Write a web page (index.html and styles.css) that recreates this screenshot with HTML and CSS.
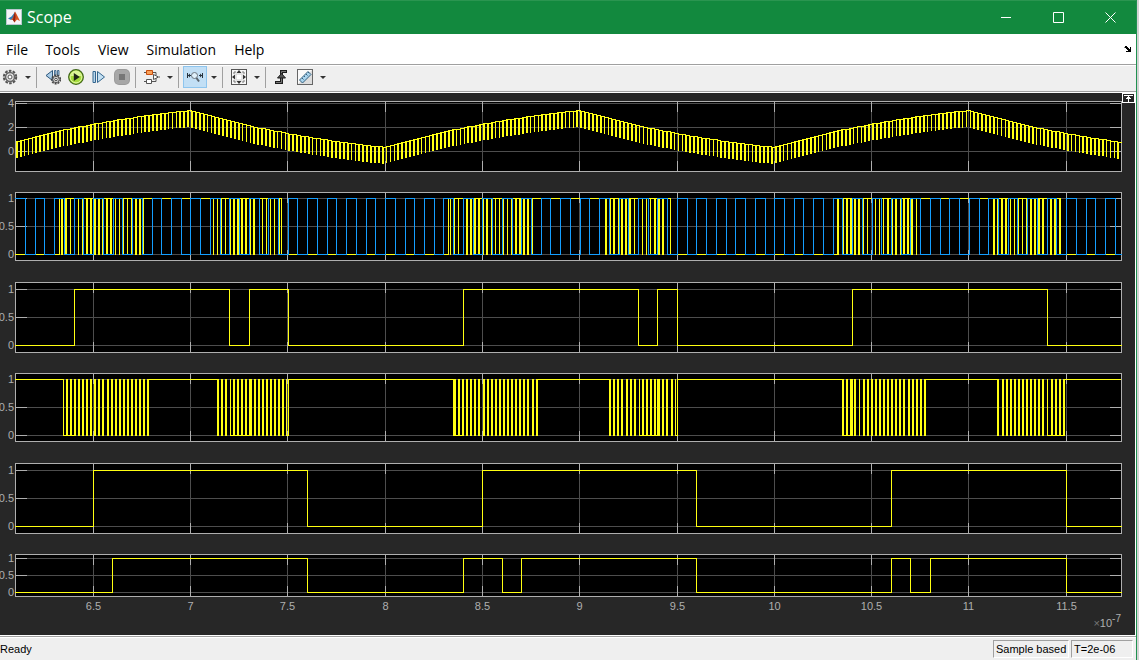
FILE: index.html
```html
<!DOCTYPE html>
<html lang="en">
<head>
<meta charset="utf-8">
<title>Scope</title>
<link rel="stylesheet" href="styles.css">
</head>
<body>
<div class="window">
  <header class="titlebar">
    <svg class="app-icon" viewBox="0 0 16 16" aria-hidden="true">
      <rect x=".5" y=".5" width="15" height="15" fill="#f4f6f8" stroke="#b9c8cf"/>
      <path d="M2 9.500 5.500 7.500 9 3 7.500 9 5 11z" fill="#2f7fb5"/>
      <path d="M5 11 7 8.500 9 2.500 10.500 5 14 12 11 10.500 8.500 13.500 7 11z" fill="#d9541e"/>
      <path d="M9 2.500 9.500 8 8.500 13.500 7 11 7.500 8z" fill="#8a2416"/>
    </svg>
    <h1 class="title">Scope</h1>
    <div class="caption-buttons">
      <button aria-label="Minimize"><svg viewBox="0 0 11 11"><path d="M0 5.500h10"/></svg></button>
      <button aria-label="Maximize"><svg viewBox="0 0 11 11"><path d="M.5 .5h10v10h-10z"/></svg></button>
      <button aria-label="Close"><svg viewBox="0 0 11 11"><path d="M.5.5l10 10M10.500.5l-10 10"/></svg></button>
    </div>
  </header>

  <nav class="menubar">
    <button>File</button>
    <button>Tools</button>
    <button>View</button>
    <button>Simulation</button>
    <button>Help</button>
    <button class="undock" aria-label="Undock"><svg viewBox="0 0 8 7"><path d="M0 1h1v-1h2v1h1v1h1v1h1v-2h1v5h-5v-1h2v-1h-1v-1h-1v-1h-1z"/></svg></button>
  </nav>

  <div class="toolbar">
    <button class="tool first" aria-label="Configuration properties"><svg viewBox="0 0 16 16">
      <circle cx="8" cy="8" r="6.200" fill="none" stroke="#555" stroke-width="2" stroke-dasharray="2.600 1.300"/>
      <circle cx="8" cy="8" r="4.500" fill="#e2e2e2" stroke="#666" stroke-width="1.500"/>
      <circle cx="8" cy="8" r="2" fill="#fff" stroke="#555"/></svg></button>
    <button class="caret" aria-label="Configuration menu"></button>
    <span class="sep"></span>
    <button class="tool" aria-label="Stepping options"><svg viewBox="0 0 16 16">
      <path d="M1 6.500 7.500 1.500v10z" fill="#a9cbe6" stroke="#2d577c"/>
      <path d="M9.500 1.500h1.500v5H9.500zM12.500 1.500H14v5h-1.500z" fill="#a9cbe6" stroke="#2d577c" stroke-width=".8"/>
      <circle cx="11" cy="10.500" r="4.300" fill="none" stroke="#444" stroke-width="1.600" stroke-dasharray="2 1"/>
      <circle cx="11" cy="10.500" r="3.200" fill="#ddd" stroke="#555"/>
      <circle cx="11" cy="10.500" r="1.300" fill="#fff" stroke="#444"/></svg></button>
    <button class="tool" aria-label="Run"><svg viewBox="0 0 16 16">
      <circle cx="8" cy="8" r="7.300" fill="#a5dc3c" stroke="#42671b" stroke-width="1.300"/>
      <circle cx="8" cy="8" r="5.900" fill="none" stroke="#e4f8a5" stroke-width="1"/>
      <path d="M3 7a5 5 0 0 1 10 0z" fill="#dcf597"/>
      <path d="M5.800 4v8l6-4z" fill="#1f2517"/></svg></button>
    <button class="tool" aria-label="Step forward"><svg viewBox="0 0 16 16">
      <path d="M2 2.500h2.500v11H2z" fill="#b8d6ec" stroke="#34668e"/>
      <path d="M6.500 2.500v11l7-5.500z" fill="#c3dff1" stroke="#34668e"/></svg></button>
    <button class="tool" aria-label="Stop" disabled><svg viewBox="0 0 16 16">
      <rect x="0" y="0" width="16" height="16" rx="5" fill="#9b9b9b"/>
      <rect x="1" y="1" width="14" height="14" rx="4" fill="#a7a7a7"/>
      <rect x="5" y="5" width="6" height="6" fill="#777"/></svg></button>
    <span class="sep"></span>
    <button class="tool" aria-label="Highlight block"><svg viewBox="0 0 16 16">
      <path d="M0 3.500h2M8 3.500h4v3M12 9v3.500H8M0 12.500h2M15 8h1" fill="none" stroke="#555"/>
      <path d="M2.500 1.500h6v4h-6z" fill="#f8a25a" stroke="#c84d0c"/>
      <path d="M2.500 10.500h5v4h-5z" fill="#fff" stroke="#555"/>
      <path d="M9.500 5.500l5 2.500-5 2.500z" fill="#fff" stroke="#555"/></svg></button>
    <button class="caret" aria-label="Highlight menu"></button>
    <span class="sep"></span>
    <button class="tool selected" aria-label="Zoom X" aria-pressed="true"><svg viewBox="0 0 16 16">
      <path d="M.5 4v5M15.500 4v5M1 6.500h3M12 6.500h3" fill="none" stroke="#26323c"/>
      <path d="M1 6.500 3 4.500v4zM15 6.500 13 4.500v4z" fill="#26323c"/>
      <circle cx="7.500" cy="6.500" r="3" fill="#dff0fb" stroke="#6c7680"/>
      <path d="M9.500 9 12 12.500" stroke="#59636b" stroke-width="2"/></svg></button>
    <button class="caret" aria-label="Zoom menu"></button>
    <span class="sep"></span>
    <button class="tool" aria-label="Scale axes limits"><svg viewBox="0 0 16 16">
      <rect x=".5" y=".5" width="15" height="15" fill="#f7f7f7" stroke="#555"/>
      <path d="M8 1l2.500 3h-5zM8 15l2.500-3h-5zM1 8l3-2.500v5zM15 8l-3-2.500v5z" fill="#333"/>
      <path d="M3 5V3h2M11 3h2v2M13 11v2h-2M5 13H3v-2" fill="none" stroke="#777"/>
      <rect x="5" y="5" width="6" height="6" fill="#fff" stroke="#ccc"/></svg></button>
    <button class="caret" aria-label="Scale menu"></button>
    <span class="sep"></span>
    <button class="tool" aria-label="Triggers"><svg viewBox="0 0 16 16">
      <path d="M1 13.500h6.500v-11H13" fill="none" stroke="#1d1d1d" stroke-width="3"/>
      <path d="M2 13.500h5.500v-11H12" fill="none" stroke="#777" stroke-width="1"/>
      <path d="M7.500 4.500l4 4.500h-8z" fill="#555" stroke="#1d1d1d"/></svg></button>
    <button class="tool" aria-label="Cursor measurements"><svg viewBox="0 0 16 16">
      <rect x=".5" y=".5" width="15" height="15" fill="#fafafa" stroke="#666"/>
      <path d="M1 15h14V1z" fill="#ddd"/>
      <path d="M2.500 11 11 2.500 14 5.500 5.500 14z" fill="#a9d4ee" stroke="#34607f"/>
      <path d="M5 9l1.500 1.500M7 7l1 1M9 5l1.500 1.500M11 3l1 1" stroke="#34607f"/></svg></button>
    <button class="caret" aria-label="Measurements menu"></button>
  </div>

  <main class="scope">
    <button class="maximize-axes" aria-label="Maximize axes"><svg viewBox="0 0 13 10">
      <path d="M0 0h13v10H0z" fill="#fff"/><path d="M1 1h11v8H1z" fill="#262626"/>
      <path d="M2 2h9v1H2zM6 3h1v1h1v1h1v1H7v3H6V6H4V5h1V4h1z" fill="#fff"/></svg></button>
    <div class="plots" id="plots"></div>
    <div class="x-axis" id="x-axis"><span class="exponent"><i>×</i>10<sup>-7</sup></span></div>
  </main>

  <footer class="statusbar">
    <span class="ready">Ready</span>
    <span class="cell mode">Sample based</span>
    <span class="cell time">T=2e-06</span>
  </footer>
</div>
<script src="scope.js"></script>
</body>
</html>
```
FILE: styles.css
```css
* { box-sizing: border-box; }
body {
  margin: 0;
  background: #d4d4d4;
  font-family: "Liberation Sans", Arial, sans-serif;
}
button {
  padding: 0;
  border: 0;
  background: none;
  color: inherit;
  font: inherit;
}
svg { display: block; }

.window {
  display: flex;
  flex-direction: column;
  height: 100vh;
  min-height: 420px;
  margin-right: 2px;
  border-right: 1px solid #1f9150;
  background: #fff;
  overflow: hidden;
}

.titlebar {
  display: flex;
  align-items: center;
  flex: none;
  height: 34px;
  padding: 0 0 1px 6px;
  border-top: 1px solid #2a9550;
  background: #12893e;
  color: #fff;
}
.app-icon { width: 16px; height: 16px; }
.title {
  flex: 1;
  margin: 0 0 0 5px;
  font: 400 16px/24px "Open Sans", "Noto Sans", sans-serif;
}
.caption-buttons { display: flex; align-self: stretch; }
.caption-buttons button {
  display: grid;
  place-items: center;
  width: 52px;
}
.caption-buttons svg { width: 11px; height: 11px; }
.caption-buttons path { fill: none; stroke: #fff; }

.menubar {
  display: flex;
  align-items: center;
  flex: none;
  height: 30px;
  padding: 1px 4px 0 0;
  background: #fff;
  color: #000;
  font: 14px/20px "Open Sans", "Noto Sans", sans-serif;
}
.menubar button { padding: 0 9px; }
.menubar button:first-child { padding: 0 8px 0 6px; }
.menubar .undock { margin-left: auto; padding: 0; }
.undock svg { width: 8px; height: 7px; }

.toolbar {
  display: flex;
  align-items: center;
  flex: none;
  height: 29px;
  padding-bottom: 3px;
  border-top: 1px solid #a0a0a0;
  border-bottom: 1px solid #fff;
  background: #efefef;
  box-shadow: inset 0 1px #fff, inset 0 -1px #a0a0a0;
}
.tool {
  display: grid;
  place-items: center;
  flex: none;
  width: 23px;
  height: 22px;
}
.tool.first { margin-left: -2px; }
.tool svg { width: 16px; height: 16px; }
.tool.selected {
  width: 24px;
  border: 1px solid #8ec5ee;
  background: #c2dff5;
}
.caret {
  display: grid;
  place-items: center;
  flex: none;
  width: 13px;
  height: 22px;
}
.caret::before {
  content: "";
  border: 3px solid transparent;
  border-top-color: #333;
  border-bottom: 0;
}
.sep {
  flex: none;
  width: 1px;
  height: 21px;
  margin: 0 4px 0 2px;
  background: #a0a0a0;
}

.scope {
  position: relative;
  display: flex;
  flex-direction: column;
  flex: 1;
  min-height: 0;
  margin-right: 1px;
  padding: 8px 13px 0 15px;
  background: #272727;
  color: #afafaf;
  font-size: 11px;
  line-height: 12px;
}
.maximize-axes {
  position: absolute;
  top: 0;
  right: 0;
}
.maximize-axes svg { width: 13px; height: 10px; }
.plots {
  display: grid;
  grid-template-rows: 91fr 90fr 91fr 90fr 91fr 43fr;
  flex: 1;
  min-height: 0;
}
.plot {
  min-height: 0;
  margin: 0;
  padding-bottom: 20px;
}
.plot:nth-child(even) { padding-bottom: 21px; }
.plot:last-child { padding-bottom: 0; }
.plot-area {
  position: relative;
  height: 100%;
}
.plot-area svg {
  width: 100%;
  height: 100%;
  shape-rendering: crispEdges;
}
.y-label {
  position: absolute;
  right: 100%;
  margin-right: 1px;
  transform: translateY(-50%);
}
.background { fill: #000; }
.grid { fill: #4d4d4d; }
.frame { fill: #afafaf; }
.yellow { fill: #ffff12; }
.blue { fill: #149eff; }

.x-axis {
  position: relative;
  flex: none;
  height: 38px;
}
.x-label {
  position: absolute;
  top: 3px;
  transform: translateX(-50%);
}
.exponent {
  position: absolute;
  top: 18px;
  right: 1px;
  font-size: 11px;
  line-height: 16px;
}
.exponent i { color: #777; font-style: normal; }
.exponent sup {
  font-size: 10px;
  line-height: 0;
}

.statusbar {
  display: flex;
  align-items: stretch;
  flex: none;
  height: 25px;
  padding: 4px 3px 2px 0;
  border-top: 1px solid #fff;
  background: #efefef;
  box-shadow: inset 0 1px #a0a0a0, inset 0 2px #fff;
  color: #000;
  font-size: 11px;
  line-height: 18px;
}
.ready { flex: 1; }
.cell {
  margin-left: 2px;
  padding-left: 2px;
  border: 1px solid #a0a0a0;
  border-right-color: #fff;
  border-bottom-color: #fff;
  line-height: 16px;
}
.mode { width: 76px; }
.time { width: 62px; }
```
FILE: scope.js
```js
const LEFT = 15;
const RIGHT = 1121;
const SPAN = RIGHT - LEFT + 1;
const TICKS = [93, 190, 287, 385, 482, 579, 677, 774, 871, 968, 1066];
const TICK_TEXT = ["6.5", "7", "7.5", "8", "8.5", "9", "9.5", "10", "10.5", "11", "11.5"];

const rect = (x, y, w, h) => `M${x} ${y}h${w}v${h}h${-w}z`;
const path = (cls, parts) => `<path class="${cls}" d="${parts.join("")}"/>`;

/* Square wave that starts low (or high) and flips at every edge. */
function square(edges, hi, lo, level = 0) {
  const out = [];
  let x = LEFT;
  for (const edge of [...edges, RIGHT]) {
    out.push(rect(x, level ? hi : lo, edge - x + 1, 1));
    if (edge !== RIGHT) out.push(rect(edge, hi, 1, lo - hi + 1));
    x = edge;
    level = 1 - level;
  }
  return out;
}

/* Pulses are [centre in thirds of a unit, width]; a bare number is two wide. */
function pulses(origin, list, hi, lo) {
  return list.map((p) => {
    const [c, w] = Array.isArray(p) ? p : [p, 2];
    return rect(Math.round(origin + c / 3 - w / 2), hi, w, lo - hi + 1);
  });
}

function ripple() {
  const out = [];
  const step = 3.892;
  const r = 0.6;
  const envelope = (x) => {
    const phase = (((x - 384) % 389.2) + 389.2) % 389.2;
    const rising = phase < 194.6;
    const u = (rising ? phase : phase - 194.6) / 97.3;
    const f = (1 - r ** u) / (1 - r * r);
    return rising ? 147 - 37 * f : 110 + 37 * f;
  };
  for (let x = 16; x < RIGHT; x += step) {
    const a = Math.round(x);
    const w = Math.round(x + 0.7) - a + 1;
    const b = Math.min(Math.round(x + step), RIGHT);
    const y = Math.round(envelope(x + 1));
    const next = Math.round(envelope(x + 1 + step));
    out.push(rect(a, y, Math.min(w, RIGHT - a), 17), rect(a, y, b - a, 1));
    out.push(rect(b, Math.min(y, next), 1, Math.abs(next - y) + 1));
  }
  return path("yellow", out);
}

function carrier() {
  const bars = [
    [0, [[179, 1], 185, 197, [211, 1], [223, 1], [235, 1], [248, 1], 261, 273, 286, 297, 309, 321, 333,
      [346, 1], [358, 1], [370, 1], [382, 1], 396, 408, 421, [430, 1],
      [640, 1], [652, 1], [664, 1], [676, 1], 690, 702, 714, 726, 738, 750, 762,
      [787, 1], [799, 1], [811, 1], [823, 1], 838, [844, 1]]],
    [290, [[475, 1], [481, 1], [493, 1], [505, 1], 530, 542, 554, 567, 579, 591, [604, 1],
      [616, 1], [628, 1], [640, 1], [652, 1], 667, 678, 690, 702, 714, [727, 1]]],
    [440, [498, 510, 522, [534, 1], 546, 558, 570, [583, 1], [607, 1], [619, 1], [631, 1],
      645, 657, 669, [681, 1], [691, 1]]],
    [820, [54, [69, 1], 81, 93, 105, 117, 129, [142, 1], [166, 1], [178, 1], [190, 1], 204, [216, 1],
      228, [240, 1], 252, 264, 276, [289, 1],
      522, [533, 1], 546, 558, [571, 1], [583, 1], [595, 1], [607, 1], [619, 1], 633, 645, 657, 669,
      [682, 1], 693, 705, 720]]
  ];
  const yellow = bars.flatMap(([o, list]) => pulses(o, list, 198, 254));
  yellow.push(...square([59, 281, 448, 670, 837, 1060], 198, 254));
  const edges = [];
  for (let x = 15.3 + 9.73; x < RIGHT; x += 9.73) edges.push(Math.round(x));
  return path("yellow", yellow) + path("blue", square(edges, 198, 254, 1));
}

function gated() {
  const bars = [
    [0, [[190, 1], 201, 213, 225, 237, 249, 261, 273, 285, 297, 309, 324, 336, 348, 360, 372, 384,
      396, 408, 420, 432, 444,
      654, 666, 678, [691, 1], 702, 714, 726, 738, [751, 3], 765, 777, 789, 801, 813, 825, 837, 849,
      [860, 1], [865, 1]]],
    [440, [[43, 3], 57, 69, 81, 93, 105, 117, 132, 144, 156, 168, 180, 192, 204, 216, 228, 240, 252,
      264, 279, 291,
      510, 522, 534, 546, 561, 573, 585, [598, 1], 609, 621, 633, 645, [655, 3], 669, 681, 696,
      [706, 1], [712, 1]]],
    [820, [69, 81, [94, 3], 105, [118, 1], 132, 144, 156, 168, 180, 192, 204, 216, 228, 240, 252,
      267, 279, 291, 303, 315,
      534, 549, 561, 573, 585, 597, 609, 621, 633, 645, 657, 669, [682, 1], 697, 709, 721, 733]]
  ];
  const out = bars.flatMap(([o, list]) => pulses(o, list, 379, 435));
  const top = [[15, 64], [148, 218], [288, 454], [537, 610], [677, 843], [925, 998], [1064, 1121]];
  const base = [[63, 75], [230, 250], [286, 288], [453, 463], [639, 658], [675, 677], [842, 852], [1047, 1064]];
  top.forEach(([a, b]) => out.push(rect(a, 379, b - a, 1)));
  base.forEach(([a, b]) => out.push(rect(a, 435, b - a, 1)));
  return path("yellow", out);
}

const unit = ["1", "0.5", "0"];
const charts = [
  { top: 101, bottom: 171, rows: [103, 127, 151], text: ["4", "2", "0"], trace: ripple() },
  { top: 192, bottom: 260, rows: [198, 226, 254], text: unit, trace: carrier() },
  { top: 282, bottom: 352, rows: [289, 317, 345], text: unit,
    trace: path("yellow", square([74, 229, 249, 288, 463, 638, 657, 677, 852, 1047], 289, 345)) },
  { top: 373, bottom: 441, rows: [379, 407, 435], text: unit, trace: gated() },
  { top: 463, bottom: 533, rows: [470, 498, 526], text: unit,
    trace: path("yellow", square([93, 307, 482, 696, 891, 1066], 470, 526)) },
  { top: 554, bottom: 596, rows: [558, 575, 592], text: unit,
    trace: path("yellow", square([112, 307, 463, 502, 521, 696, 891, 910, 930, 1066], 558, 592)) }
];

document.getElementById("plots").innerHTML = charts.map(({ top, bottom, rows, text, trace }) => {
  const h = bottom - top + 1;
  const grid = [
    ...rows.map((y) => rect(LEFT, y, SPAN, 1)),
    ...TICKS.map((x) => rect(x, top, 1, h))
  ];
  const frame = [
    rect(LEFT, top, SPAN, 1), rect(LEFT, bottom, SPAN, 1),
    rect(LEFT, top, 1, h), rect(RIGHT, top, 1, h),
    ...rows.flatMap((y) => [rect(LEFT, y, 12, 1), rect(RIGHT - 11, y, 12, 1)]),
    ...TICKS.flatMap((x) => [rect(x, top, 1, 11), rect(x, bottom - 10, 1, 11)])
  ];
  const labels = rows.map((y, i) =>
    `<span class="y-label" style="top:${((y - top) / h) * 100}%">${text[i]}</span>`).join("");
  return `<figure class="plot"><div class="plot-area">
    <svg viewBox="${LEFT} ${top} ${SPAN} ${h}" preserveAspectRatio="none">
      <rect class="background" x="${LEFT}" y="${top}" width="${SPAN}" height="${h}"/>
      ${path("grid", grid)}${path("frame", frame)}${trace}
    </svg>${labels}</div></figure>`;
}).join("");

document.getElementById("x-axis").insertAdjacentHTML("afterbegin", TICKS.map((x, i) =>
  `<span class="x-label" style="left:${((x - LEFT + 0.5) / SPAN) * 100}%">${TICK_TEXT[i]}</span>`).join(""));
```
